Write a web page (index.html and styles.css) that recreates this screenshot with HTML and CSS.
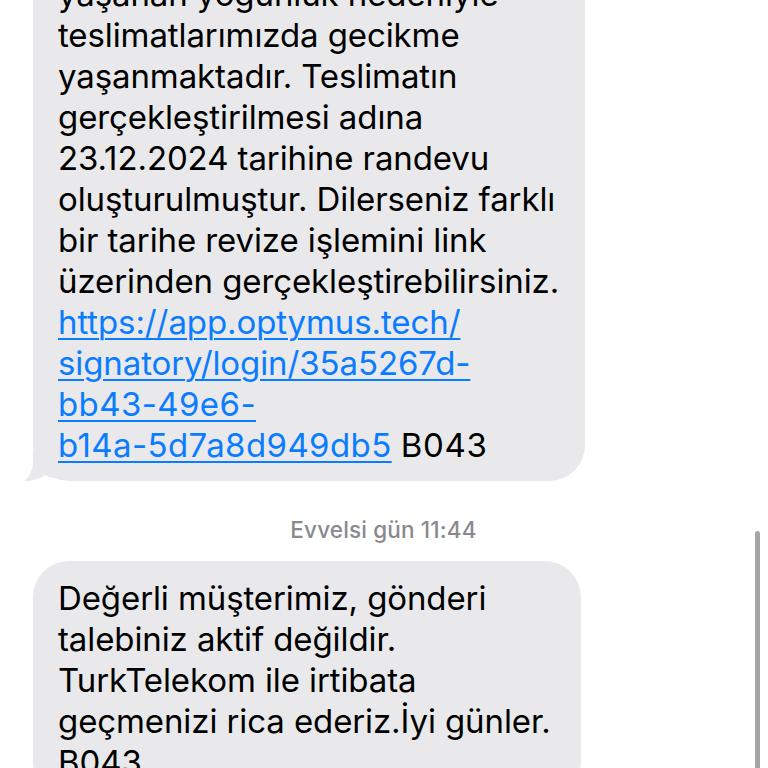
FILE: index.html
```html
<!DOCTYPE html>
<html lang="tr">
<head>
<meta charset="utf-8">
<link rel="stylesheet" href="styles.css">
</head>
<body>
<div class="screen">
  <div class="thread">
    <div class="bubble first">
      <svg class="tail" width="30" height="30" viewBox="0 0 30 30"><path d="M9 0 L9 10 C9 19 6 25 0 30 C7 30 15 28 21 24 C24 26 27 27 30 27 L30 0 Z" fill="#e9e9eb"/></svg>
      yaşanan yoğunluk nedeniyle<br>
      teslimatlarımızda gecikme<br>
      yaşanmaktadır. Teslimatın<br>
      gerçekleştirilmesi adına<br>
      23.12.2024 tarihine randevu<br>
      oluşturulmuştur. Dilerseniz farklı<br>
      bir tarihe revize işlemini link<br>
      üzerinden gerçekleştirebilirsiniz.<br>
      <a class="link" href="#">https://app.optymus.tech/<br>signatory/login/35a5267d-<br><span class="wide-s">bb43-49e6-</span><br><span class="wide">b14a-5d7a8d949db5</span></a> <span class="code">B043</span>
    </div>
    <div class="stamp">Evvelsi gün 11:44</div>
    <div class="bubble second">
      Değerli müşterimiz, gönderi<br>
      talebiniz aktif değildir.<br>
      TurkTelekom ile irtibata<br>
      geçmenizi rica ederiz.İyi günler.<br>
      B043
    </div>
  </div>
  <div class="scrollbar"></div>
</div>
</body>
</html>
```
FILE: styles.css
```css
html, body {
  margin: 0;
  padding: 0;
  background: #ffffff;
}
.screen {
  position: relative;
  width: 768px;
  height: 768px;
  overflow: hidden;
  font-family: Inter, "Noto Sans", "Liberation Sans", sans-serif;
}
.thread {
  display: flex;
  flex-direction: column;
  align-items: flex-start;
  padding-left: 33px;
}
.bubble {
  position: relative;
  box-sizing: border-box;
  background: #e9e9eb;
  border-radius: 36px;
  color: #000000;
  font-size: 33px;
  line-height: 41px;
  letter-spacing: -0.1px;
  padding: 17px 20px 15px 25px;
  white-space: nowrap;
}
.first {
  width: 552px;
  margin-top: -43px;
}
.second {
  width: 548px;
  margin-top: 0;
}
.link {
  color: #0a7cff;
  text-decoration: underline;
  text-decoration-thickness: 2px;
  text-underline-offset: 4px;
}
.wide {
  letter-spacing: 0.4px;
}
.wide-s {
  letter-spacing: 0.4px;
}
.code {
  letter-spacing: 0.6px;
}
.tail {
  position: absolute;
  left: -9px;
  bottom: 0;
}
.stamp {
  align-self: center;
  margin: 36px 0 18px -34px;
  font-size: 22.5px;
  line-height: 26px;
  font-weight: 500;
  color: #8a8a8e;
  letter-spacing: 0.15px;
}
.scrollbar {
  position: absolute;
  left: 755px;
  top: 531px;
  width: 5px;
  height: 250px;
  border-radius: 3px;
  background: #a6a6a6;
}
```
